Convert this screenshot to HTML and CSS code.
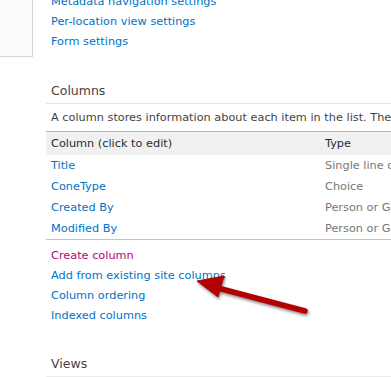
FILE: index.html
```html
<!DOCTYPE html>
<html lang="en">

<head>
    <meta charset="UTF-8">
    <meta name="viewport" content="width=device-width, initial-scale=1.0">
    <title>List Settings - Columns</title>
    <link rel="stylesheet" href="styles.css">
</head>

<body>
    <div class="page">
        <!-- left side panel (cut) -->
        <div class="side"></div>

        <!-- main settings area -->
        <div class="main">
            <ul class="links">
                <li><a href="#">Metadata navigation settings</a></li>
                <li><a href="#">Per-location view settings</a></li>
                <li><a href="#">Form settings</a></li>
            </ul>

            <!-- Columns -->
            <h3 class="sec-tit">Columns</h3>
            <p class="desc">A column stores information about each item in the list. The following columns are currently available in this list:</p>

            <table class="cols">
                <thead>
                    <tr>
                        <th class="c1">Column (click to edit)</th>
                        <th>Type</th>
                    </tr>
                </thead>
                <tbody>
                    <tr>
                        <td class="c1"><a href="#">Title</a></td>
                        <td>Single line of text</td>
                    </tr>
                    <tr>
                        <td class="c1"><a href="#">ConeType</a></td>
                        <td>Choice</td>
                    </tr>
                    <tr>
                        <td class="c1"><a href="#">Created By</a></td>
                        <td>Person or Group</td>
                    </tr>
                    <tr>
                        <td class="c1"><a href="#">Modified By</a></td>
                        <td>Person or Group</td>
                    </tr>
                </tbody>
            </table>

            <ul class="links col-links">
                <li><a href="#" class="visited">Create column</a></li>
                <li><a href="#">Add from existing site columns</a></li>
                <li><a href="#">Column ordering</a></li>
                <li><a href="#">Indexed columns</a></li>
            </ul>

            <!-- Views -->
            <h3 class="sec-tit views">Views</h3>
        </div>
    </div>

    <!-- red annotation arrow -->
    <svg class="arrow" width="391" height="377" viewBox="0 0 391 377">
        <g class="arr">
            <line x1="305" y1="311" x2="214" y2="287" />
            <polygon points="197,281 224,276 218,297" />
        </g>
    </svg>
</body>

</html>
```

FILE: styles.css
```css
html,
body {
    margin: 0;
    padding: 0;
}

body {
    position: relative;
    width: 391px;
    height: 377px;
    overflow: hidden;
    background-color: #fff;
    font-family: "DejaVu Sans", Verdana, sans-serif;
    font-size: 11.3px;
    color: #444;
}

ul {
    margin: 0;
    padding: 0;
    list-style: none;
}

a {
    color: #0072c6;
    text-decoration: none;
}

/* 전체 */
.page {
    display: flex;
    align-items: flex-start;
}

/* 왼쪽 패널 */
.side {
    flex: none;
    width: 32px;
    height: 56px;
    border-right: 1px solid #d6d6d6;
    border-bottom: 1px solid #d6d6d6;
    background-color: #fbfbfb;
}

/* 본문 */
.main {
    flex: none;
    width: 700px;
    margin-left: 13px;
    margin-top: -8px;
}

.links li {
    line-height: 20px;
    padding-left: 5px;
    white-space: nowrap;
}

/* 섹션 제목 */
.sec-tit {
    margin: 29px 0 0;
    padding: 0 0 2px 5px;
    font-size: 12.5px;
    font-weight: normal;
    line-height: 20px;
    color: #444;
    border-bottom: 1px solid #e6e6e6;
}

.desc {
    margin: 4px 0 0;
    padding-left: 5px;
    line-height: 20px;
    white-space: nowrap;
}

/* 컬럼 테이블 */
.cols {
    width: 100%;
    margin-top: 3px;
    border-collapse: collapse;
    border-top: 1px solid #b1b9c4;
    border-bottom: 1px solid #c4c4c4;
}

.cols th {
    height: 23px;
    padding: 0 5px;
    text-align: left;
    font-weight: normal;
    color: #262c3a;
    background-color: #f1f1f1;
}

.cols td {
    height: 21px;
    padding: 0 5px;
    color: #777;
    white-space: nowrap;
}

.cols .c1 {
    width: 264px;
}

.col-links {
    margin-top: 6px;
}

.col-links .visited {
    color: #b1037e;
}

.views {
    margin-top: 28px;
    border-bottom-color: #ececec;
}

/* 화살표 */
.arrow {
    position: absolute;
    top: 0;
    left: 0;
}

.arr {
    filter: drop-shadow(1px 2px 1.5px rgba(0, 0, 0, .45));
}

.arr line {
    stroke: #b30000;
    stroke-width: 5.5;
    stroke-linecap: round;
}

.arr polygon {
    fill: #b30000;
    stroke: #b30000;
    stroke-width: 1;
    stroke-linejoin: round;
}
```
